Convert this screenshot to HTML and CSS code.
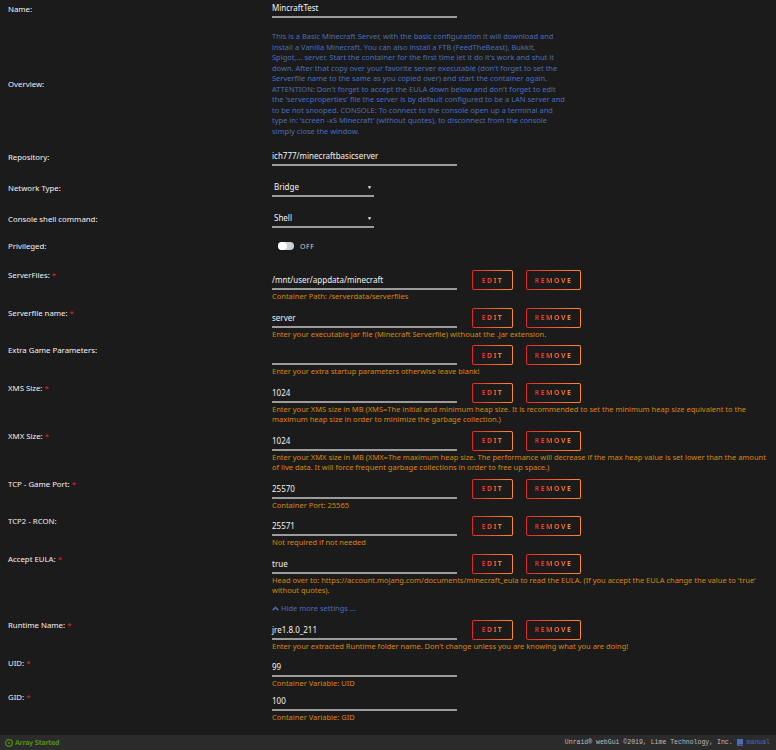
FILE: index.html
```html
<!DOCTYPE html>
<html lang="en">
<head>
    <meta charset="UTF-8">
    <meta name="viewport" content="width=device-width, initial-scale=1.0">
    <title>Update Container</title>
    <link rel="stylesheet" href="styles.css">
</head>
<body>
    <div class="page">
        <div class="row basic first">
            <div class="label">Name:</div>
            <div class="input wide">MincraftTest</div>
        </div>

        <div class="row overview">
            <div class="label">Overview:</div>
            <div class="blurb">This is a Basic Minecraft Server, with the basic configuration it will download and<br>install a Vanilla Minecraft. You can also install a FTB (FeedTheBeast), Bukkit,<br>Spigot,... server. Start the container for the first time let it do it's work and shut it<br>down. After that copy over your favorite server executable (don't forget to set the<br>Serverfile name to the same as you copied over) and start the container again.<br>ATTENTION: Don't forget to accept the EULA down below and don't forget to edit<br>the 'server.properties' file the server is by default configured to be a LAN server and<br>to be not snooped. CONSOLE: To connect to the console open up a terminal and<br>type in: 'screen -xS Minecraft' (without quotes), to disconnect from the console<br>simply close the window.</div>
        </div>

        <div class="row basic">
            <div class="label">Repository:</div>
            <div class="input wide">ich777/minecraftbasicserver</div>
        </div>

        <div class="row basic">
            <div class="label">Network Type:</div>
            <div class="input select">Bridge<span class="caret">&#9660;</span></div>
        </div>

        <div class="row basic">
            <div class="label">Console shell command:</div>
            <div class="input select">Shell<span class="caret">&#9660;</span></div>
        </div>

        <div class="row privileged">
            <div class="label">Privileged:</div>
            <div class="toggle"><span class="switch"><span class="knob"></span></span><span class="off">OFF</span></div>
        </div>

        <div class="row cfg">
            <div class="label">ServerFiles: <span class="req">*</span></div>
            <div class="field">
                <div class="line">
                    <div class="input wide">/mnt/user/appdata/minecraft</div>
                    <button class="btn edit"><span>EDIT</span></button>
                    <button class="btn remove"><span>REMOVE</span></button>
                </div>
                <div class="desc">Container Path: /serverdata/serverfiles</div>
            </div>
        </div>

        <div class="row cfg">
            <div class="label">Serverfile name: <span class="req">*</span></div>
            <div class="field">
                <div class="line">
                    <div class="input wide">server</div>
                    <button class="btn edit"><span>EDIT</span></button>
                    <button class="btn remove"><span>REMOVE</span></button>
                </div>
                <div class="desc">Enter your executable jar file (Minecraft Serverfile) withouat the .jar extension.</div>
            </div>
        </div>

        <div class="row cfg">
            <div class="label">Extra Game Parameters:</div>
            <div class="field">
                <div class="line">
                    <div class="input wide"></div>
                    <button class="btn edit"><span>EDIT</span></button>
                    <button class="btn remove"><span>REMOVE</span></button>
                </div>
                <div class="desc">Enter your extra startup parameters otherwise leave blank!</div>
            </div>
        </div>

        <div class="row cfg">
            <div class="label">XMS Size: <span class="req">*</span></div>
            <div class="field">
                <div class="line">
                    <div class="input wide">1024</div>
                    <button class="btn edit"><span>EDIT</span></button>
                    <button class="btn remove"><span>REMOVE</span></button>
                </div>
                <div class="desc">Enter your XMS size in MB (XMS=The initial and minimum heap size. It is recommended to set the minimum heap size equivalent to the<br>maximum heap size in order to minimize the garbage collection.)</div>
            </div>
        </div>

        <div class="row cfg">
            <div class="label">XMX Size: <span class="req">*</span></div>
            <div class="field">
                <div class="line">
                    <div class="input wide">1024</div>
                    <button class="btn edit"><span>EDIT</span></button>
                    <button class="btn remove"><span>REMOVE</span></button>
                </div>
                <div class="desc">Enter your XMX size in MB (XMX=The maximum heap size. The performance will decrease if the max heap value is set lower than the amount<br>of live data. It will force frequent garbage collections in order to free up space.)</div>
            </div>
        </div>

        <div class="row cfg">
            <div class="label">TCP - Game Port: <span class="req">*</span></div>
            <div class="field">
                <div class="line">
                    <div class="input wide">25570</div>
                    <button class="btn edit"><span>EDIT</span></button>
                    <button class="btn remove"><span>REMOVE</span></button>
                </div>
                <div class="desc">Container Port: 25565</div>
            </div>
        </div>

        <div class="row cfg">
            <div class="label">TCP2 - RCON:</div>
            <div class="field">
                <div class="line">
                    <div class="input wide">25571</div>
                    <button class="btn edit"><span>EDIT</span></button>
                    <button class="btn remove"><span>REMOVE</span></button>
                </div>
                <div class="desc">Not required if not needed</div>
            </div>
        </div>

        <div class="row cfg eula">
            <div class="label">Accept EULA: <span class="req">*</span></div>
            <div class="field">
                <div class="line">
                    <div class="input wide">true</div>
                    <button class="btn edit"><span>EDIT</span></button>
                    <button class="btn remove"><span>REMOVE</span></button>
                </div>
                <div class="desc">Head over to: https://account.mojang.com/documents/minecraft_eula to read the EULA. (If you accept the EULA change the value to 'true'<br>without quotes).</div>
            </div>
        </div>

        <div class="row more">
            <div></div>
            <a class="toggle-link" href="#">
                <svg width="7" height="5" viewBox="0 0 10 7"><path d="M1 6 L5 2 L9 6" fill="none" stroke="#486dba" stroke-width="2.2"/></svg>
                Hide more settings ...
            </a>
        </div>

        <div class="row cfg">
            <div class="label">Runtime Name: <span class="req">*</span></div>
            <div class="field">
                <div class="line">
                    <div class="input wide">jre1.8.0_211</div>
                    <button class="btn edit"><span>EDIT</span></button>
                    <button class="btn remove"><span>REMOVE</span></button>
                </div>
                <div class="desc">Enter your extracted Runtime folder name. Don't change unless you are knowing what you are doing!</div>
            </div>
        </div>

        <div class="row cfg plain uid">
            <div class="label">UID: <span class="req">*</span></div>
            <div class="field">
                <div class="line">
                    <div class="input wide">99</div>
                </div>
                <div class="desc">Container Variable: UID</div>
            </div>
        </div>

        <div class="row cfg plain">
            <div class="label">GID: <span class="req">*</span></div>
            <div class="field">
                <div class="line">
                    <div class="input wide">100</div>
                </div>
                <div class="desc">Container Variable: GID</div>
            </div>
        </div>
    </div>

    <div class="footer">
        <div class="status">
            <svg width="8" height="8" viewBox="0 0 10 10"><circle cx="5" cy="5" r="4.2" fill="none" stroke="#4f8a10" stroke-width="1.6"/><path d="M4 3 L7 5 L4 7 Z" fill="#4f8a10"/></svg>
            Array Started
        </div>
        <div class="copy">
            Unraid&reg; webGui &copy;2019, Lime Technology, Inc.
            <svg width="6" height="7" viewBox="0 0 6 7"><path d="M1 0 H6 V5.5 H1.5 A0.7 0.7 0 0 0 1.5 6.3 H6 V7 H1.3 A1.3 1.3 0 0 1 0 5.7 V1 A1 1 0 0 1 1 0 Z" fill="#486dba"/></svg>
            <span class="manual">manual</span>
        </div>
    </div>
</body>
</html>
```

FILE: styles.css
```css
html, body {
    margin: 0;
    padding: 0;
    height: 100%;
}

body {
    background: #1c1b1b;
    color: #f2f2f2;
    font-family: 'Noto Sans', 'Open Sans', sans-serif;
    font-size: 8px;
    display: flex;
    flex-direction: column;
    overflow: hidden;
}

.page {
    flex: 1;
    padding-left: 8px;
    overflow: hidden;
}

/* every setting is a label column and a value column */
.row {
    display: grid;
    grid-template-columns: 264px auto;
    margin-bottom: 13px;
}

.label {
    font-size: 7.8px;
    line-height: 10px;
    color: #f2f2f2;
    white-space: nowrap;
}

.req {
    color: #e22828;
}

.basic .label {
    padding-top: 4px;
}

.first {
    margin-bottom: 13px;
}

.input {
    box-sizing: border-box;
    height: 18px;
    line-height: 16px;
    border-bottom: 2px solid #9b9b9b;
    font-size: 8px;
    color: #f2f2f2;
    white-space: nowrap;
}

.input.wide {
    width: 185px;
}

.input.select {
    width: 102px;
    padding-left: 2px;
    position: relative;
}

.caret {
    position: absolute;
    right: 2px;
    top: 0;
    font-size: 5px;
}

/* overview text */
.overview .label {
    align-self: center;
}

.blurb {
    color: #486dba;
    font-size: 7.5px;
    line-height: 10.5px;
    white-space: nowrap;
}

.overview {
    margin-bottom: 12px;
}

/* privileged switch */
.privileged {
    margin-bottom: 19px;
}

.toggle {
    display: flex;
    align-items: center;
    height: 10px;
    padding-left: 6px;
}

.switch {
    width: 16px;
    height: 8px;
    border-radius: 4px;
    background: #cfcfcf;
    display: inline-block;
}

.knob {
    display: block;
    width: 9px;
    height: 8px;
    border-radius: 4px;
    background: #ffffff;
}

.off {
    margin-left: 6px;
    font-size: 7px;
    letter-spacing: 0.6px;
    color: #cfcfcf;
}

/* config rows with edit / remove buttons */
.cfg {
    margin-bottom: 6px;
}

.line {
    display: flex;
    align-items: flex-end;
    height: 20px;
}

.btn {
    box-sizing: border-box;
    height: 20px;
    margin-left: 15px;
    padding: 0;
    border: 1px solid transparent;
    border-radius: 2px;
    background: linear-gradient(#1c1b1b, #1c1b1b) padding-box,
                linear-gradient(90deg, #e22828, #ff8c2f) border-box;
    font-family: 'Noto Sans', sans-serif;
    font-size: 7px;
    font-weight: bold;
    letter-spacing: 1.4px;
    cursor: pointer;
}

.btn span {
    background: linear-gradient(90deg, #e22828, #ff8c2f);
    -webkit-background-clip: text;
    background-clip: text;
    color: transparent;
}

.btn.edit {
    width: 41px;
}

.btn.remove {
    width: 55px;
    margin-left: 13px;
}

.desc {
    margin-top: 1px;
    font-size: 7.5px;
    line-height: 10.5px;
    color: #d9860c;
    white-space: nowrap;
}

.eula {
    margin-bottom: 7px;
}

.more {
    margin-bottom: 7px;
}

.toggle-link {
    color: #486dba;
    text-decoration: none;
    font-size: 7.5px;
    line-height: 10px;
}

/* rows without buttons */
.plain .label {
    padding-top: 1px;
}

.uid {
    margin-top: 4px;
    margin-bottom: 2px;
}

/* bottom status bar */
.footer {
    height: 15px;
    background: #2b2b2b;
    display: flex;
    justify-content: space-between;
    align-items: center;
    padding: 0 6px 0 5px;
}

.status {
    display: flex;
    align-items: center;
    gap: 2px;
    color: #4f8a10;
    font-family: 'Liberation Sans Narrow', 'DejaVu Sans Condensed', sans-serif;
    font-weight: bold;
    font-size: 7px;
    letter-spacing: -0.3px;
}

.copy {
    display: flex;
    align-items: center;
    gap: 4px;
    font-family: 'Liberation Mono', monospace;
    font-size: 6.5px;
    color: #bdbdbd;
}

.manual {
    color: #486dba;
}
```
